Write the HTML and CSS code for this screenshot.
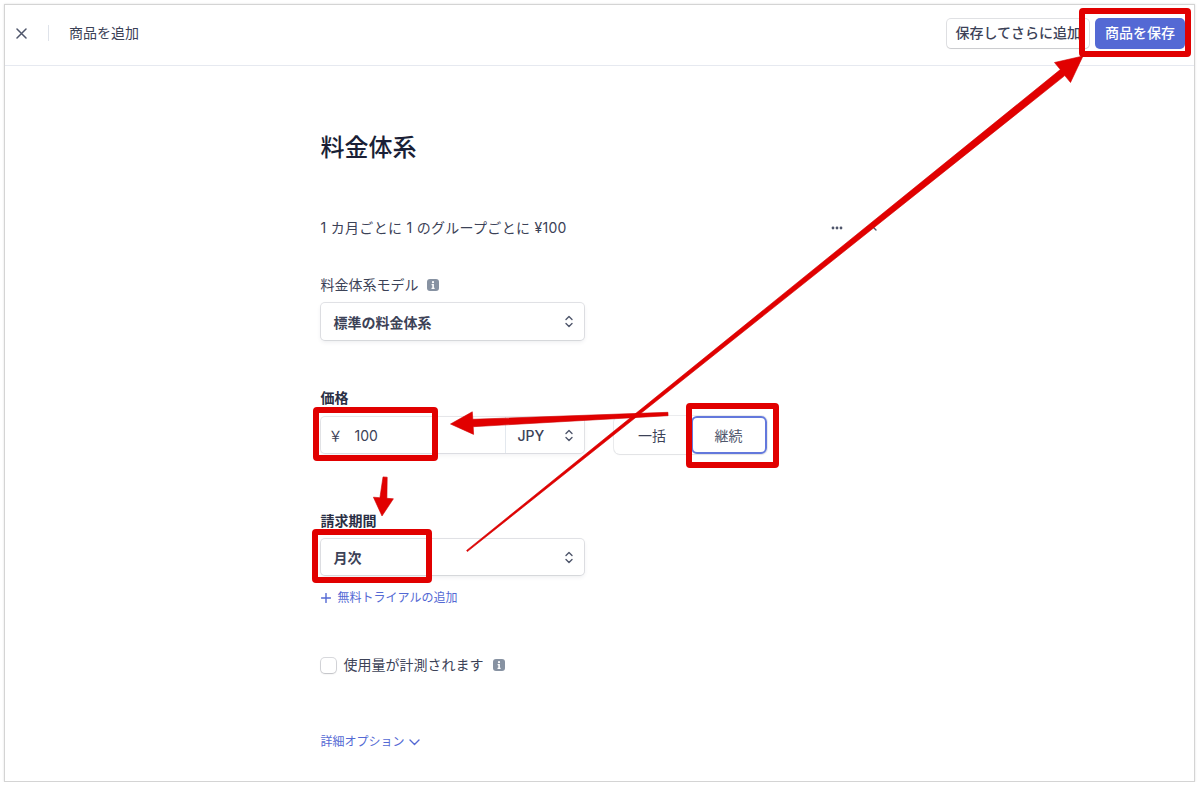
FILE: index.html
```html
<!DOCTYPE html>
<html lang="ja">
<head>
<meta charset="utf-8">
<title>商品を追加</title>
<link rel="stylesheet" href="styles.css">
</head>
<body>
<div class="frame">
  <header class="topbar">
    <div class="top-left">
      <svg class="close-icon" width="11" height="11" viewBox="0 0 11 11"><path d="M1 1 L10 10 M10 1 L1 10" fill="none" stroke="#4f566b" stroke-width="1.5" stroke-linecap="round"/></svg>
      <span class="divider"></span>
      <span class="top-title">商品を追加</span>
    </div>
    <div class="top-right">
      <button class="btn btn-secondary">保存してさらに追加</button>
      <button class="btn btn-primary">商品を保存</button>
    </div>
  </header>

  <main class="content">
    <h1 class="title">料金体系</h1>

    <div class="summary">
      <span>1 カ月ごとに 1 のグループごとに ¥100</span>
      <div class="summary-actions">
        <svg width="12" height="4" viewBox="0 0 12 4"><circle cx="2" cy="2" r="1.4" fill="#4f566b"/><circle cx="6" cy="2" r="1.4" fill="#4f566b"/><circle cx="10" cy="2" r="1.4" fill="#4f566b"/></svg>
        <svg width="10" height="6" viewBox="0 0 10 6"><path d="M1 5 L5 1 L9 5" fill="none" stroke="#4f566b" stroke-width="1.4" stroke-linecap="round" stroke-linejoin="round"/></svg>
      </div>
    </div>

    <div class="label label-model">
      <span>料金体系モデル</span>
      <svg class="info" width="12" height="12" viewBox="0 0 12 12"><rect width="12" height="12" rx="3" fill="#8792a2"/><circle cx="6" cy="3.2" r="1.1" fill="#fff"/><path d="M4.6 5.1 H6.9 V8.8 H7.6 V9.9 H4.5 V8.8 H5.3 V6.2 H4.6 Z" fill="#fff"/></svg>
    </div>
    <div class="select select-model">
      <span>標準の料金体系</span>
      <svg width="8" height="13" viewBox="0 0 8 13"><path d="M1 4.5 L4 1.5 L7 4.5 M1 8.5 L4 11.5 L7 8.5" fill="none" stroke="#4f566b" stroke-width="1.4" stroke-linecap="round" stroke-linejoin="round"/></svg>
    </div>

    <div class="label label-strong label-price">価格</div>
    <div class="price-row">
      <div class="price-group">
        <div class="price-input"><span class="yen">￥</span><span class="amount">100</span></div>
        <div class="currency">
          <span>JPY</span>
          <svg width="8" height="13" viewBox="0 0 8 13"><path d="M1 4.5 L4 1.5 L7 4.5 M1 8.5 L4 11.5 L7 8.5" fill="none" stroke="#4f566b" stroke-width="1.4" stroke-linecap="round" stroke-linejoin="round"/></svg>
        </div>
      </div>
      <div class="segment">
        <span class="seg-item">一括</span>
        <span class="seg-item seg-selected">継続</span>
      </div>
    </div>

    <div class="label label-strong label-period">請求期間</div>
    <div class="select select-period">
      <span>月次</span>
      <svg width="8" height="13" viewBox="0 0 8 13"><path d="M1 4.5 L4 1.5 L7 4.5 M1 8.5 L4 11.5 L7 8.5" fill="none" stroke="#4f566b" stroke-width="1.4" stroke-linecap="round" stroke-linejoin="round"/></svg>
    </div>

    <a class="link link-trial">
      <svg width="10" height="10" viewBox="0 0 10 10"><path d="M5 0.5 V9.5 M0.5 5 H9.5" fill="none" stroke="#5469d4" stroke-width="1.4" stroke-linecap="round"/></svg>
      <span>無料トライアルの追加</span>
    </a>

    <label class="check-row">
      <span class="checkbox"></span>
      <span>使用量が計測されます</span>
      <svg class="info" width="12" height="12" viewBox="0 0 12 12"><rect width="12" height="12" rx="3" fill="#8792a2"/><circle cx="6" cy="3.2" r="1.1" fill="#fff"/><path d="M4.6 5.1 H6.9 V8.8 H7.6 V9.9 H4.5 V8.8 H5.3 V6.2 H4.6 Z" fill="#fff"/></svg>
    </label>

    <a class="link link-more">
      <span>詳細オプション</span>
      <svg width="11" height="7" viewBox="0 0 11 7"><path d="M1 1 L5.5 5.5 L10 1" fill="none" stroke="#5469d4" stroke-width="1.4" stroke-linecap="round" stroke-linejoin="round"/></svg>
    </a>
  </main>
</div>

<svg class="annotations" width="1200" height="787" viewBox="0 0 1200 787">
  <g fill="none" stroke="#e10000" stroke-width="6" stroke-linejoin="round">
    <rect x="1082" y="11" width="106" height="43" rx="1"/>
    <rect x="316" y="410" width="119" height="48" rx="1"/>
    <rect x="689" y="406" width="87" height="59" rx="1"/>
    <rect x="315" y="532" width="114" height="48" rx="1"/>
  </g>
  <g fill="#e10000" stroke="#d00000" stroke-width="0.6" stroke-linejoin="round">
    <polygon points="466.6,550.4 1060.3,69.6 1054.5,62.5 1083,56 1070.5,82.5 1064.8,75.6 467.4,551.6"/>
    <polygon points="667.9,412.3 472.8,419.3 472.3,411.8 450.5,424 473.6,434.4 473.2,426.7 668.1,415.7"/>
    <polygon points="383,476.9 379.9,497.7 373.4,497.2 382,516 393.4,498.8 386.9,498.3 387.2,477.2"/>
  </g>
</svg>
</body>
</html>
```

FILE: styles.css
```css
html, body {
  margin: 0;
  padding: 0;
  background: #ffffff;
}

body {
  font-family: "Inter", "Noto Sans CJK JP", sans-serif;
  color: #3c4257;
  font-size: 14px;
}

.frame {
  box-sizing: border-box;
  width: 1191px;
  height: 778px;
  margin: 4px 0 0 4px;
  border: 1px solid #d4d4d4;
  box-shadow: 0 0 2px rgba(0, 0, 0, 0.12);
  background: #ffffff;
  overflow: hidden;
}

/* top bar */
.topbar {
  box-sizing: border-box;
  height: 61px;
  padding: 0 10px 4px 11px;
  display: flex;
  align-items: center;
  justify-content: space-between;
  border-bottom: 1px solid #e6e9f0;
}

.top-left {
  display: flex;
  align-items: center;
}

.close-icon {
  display: block;
}

.divider {
  width: 1px;
  height: 16px;
  background: #dfe3ea;
  margin-left: 21px;
}

.top-title {
  margin-left: 20px;
  font-size: 14px;
  line-height: 20px;
  color: #3c4257;
}

.top-right {
  display: flex;
  align-items: center;
  gap: 7px;
}

.btn {
  font-family: inherit;
  font-size: 14px;
  font-weight: 500;
  line-height: 20px;
  height: 29px;
  padding: 0 8px;
  border: 0;
  border-radius: 4px;
}

.btn-secondary {
  background: #ffffff;
  color: #3c4257;
  box-shadow: 0 0 0 1px rgba(60, 66, 87, 0.16), 0 1px 1px rgba(0, 0, 0, 0.1);
}

.btn-primary {
  background: #5469d4;
  color: #ffffff;
  padding: 0 9px;
  box-shadow: 0 0 0 1px #5469d4, 0 1px 1px rgba(0, 0, 0, 0.12);
}

/* content */
.content {
  width: 558px;
  margin: 0 auto;
  display: flex;
  flex-direction: column;
  align-items: flex-start;
}

.title {
  margin: 66px 0 0 0;
  font-size: 24px;
  line-height: 32px;
  font-weight: 500;
  color: #1a1f36;
}

.summary {
  align-self: stretch;
  margin-top: 54px;
  display: flex;
  align-items: center;
  justify-content: space-between;
  line-height: 20px;
  font-size: 14px;
  letter-spacing: 0.3px;
  color: #3c4257;
}

.summary-actions {
  display: flex;
  align-items: center;
  gap: 24px;
  padding-right: 2px;
}

.summary-actions svg {
  display: block;
}

.label {
  display: flex;
  align-items: center;
  line-height: 20px;
  font-size: 14px;
  color: #3c4257;
}

.label-strong {
  font-weight: 600;
  color: #2a2f45;
}

.label-model {
  margin-top: 37px;
}

.label-price {
  margin-top: 48px;
}

.label-period {
  margin-top: 58px;
}

.info {
  display: block;
  margin-left: 8px;
}

.select {
  box-sizing: border-box;
  width: 263px;
  height: 37px;
  margin-top: 8px;
  padding: 0 11px 0 13px;
  display: flex;
  align-items: center;
  justify-content: space-between;
  border-radius: 4px;
  background: #ffffff;
  box-shadow: 0 0 0 1px rgba(60, 66, 87, 0.14), 0 2px 4px rgba(60, 66, 87, 0.1);
  font-size: 14px;
  font-weight: 600;
  color: #3c4257;
}

.select svg {
  display: block;
}

.select-period {
  height: 36px;
}

/* price row */
.price-row {
  margin-top: 9px;
  height: 36px;
  display: flex;
  align-items: center;
}

.price-group {
  box-sizing: border-box;
  width: 263px;
  height: 36px;
  display: flex;
  border-radius: 4px;
  background: #ffffff;
  box-shadow: 0 0 0 1px rgba(60, 66, 87, 0.12), 0 2px 4px rgba(60, 66, 87, 0.08);
}

.price-input {
  flex: 1;
  display: flex;
  align-items: center;
  padding-left: 8px;
  font-size: 14px;
  color: #3c4257;
}

.yen {
  font-family: "Noto Sans CJK JP", sans-serif;
}

.amount {
  margin-left: 12px;
}

.currency {
  box-sizing: border-box;
  width: 79px;
  display: flex;
  align-items: center;
  justify-content: space-between;
  padding: 0 11px 0 12px;
  border-left: 1px solid #e3e8ee;
  font-size: 14px;
  font-weight: 500;
  color: #3c4257;
}

.currency svg {
  display: block;
}

.segment {
  flex: none;
  margin-left: 30px;
  height: 38px;
  display: flex;
  border-radius: 6px;
  background: #ffffff;
  box-shadow: 0 0 0 1px rgba(60, 66, 87, 0.1), 0 1px 2px rgba(60, 66, 87, 0.06);
}

.seg-item {
  box-sizing: border-box;
  width: 77px;
  display: flex;
  align-items: center;
  justify-content: center;
  font-size: 14px;
  color: #3c4257;
}

.seg-selected {
  width: 76px;
  border: 2px solid #6378dc;
  border-radius: 6px;
  color: #4f566b;
}

/* links */
.link {
  display: flex;
  align-items: center;
  gap: 7px;
  font-size: 12px;
  line-height: 18px;
  color: #5469d4;
  text-decoration: none;
}

.link svg {
  display: block;
}

.link-trial {
  margin-top: 14px;
}

.link-more {
  margin-top: 58px;
  gap: 4px;
}

/* checkbox */
.check-row {
  margin-top: 48px;
  display: flex;
  align-items: center;
  line-height: 20px;
  font-size: 14px;
  color: #3c4257;
}

.checkbox {
  box-sizing: border-box;
  width: 15px;
  height: 15px;
  margin-right: 8px;
  border-radius: 4px;
  background: #ffffff;
  box-shadow: 0 0 0 1px rgba(60, 66, 87, 0.2), 0 1px 2px rgba(0, 0, 0, 0.12);
}

.check-row .info {
  margin-left: 9px;
}

/* annotation overlay */
.annotations {
  position: absolute;
  top: 0;
  left: 0;
  pointer-events: none;
}
```
